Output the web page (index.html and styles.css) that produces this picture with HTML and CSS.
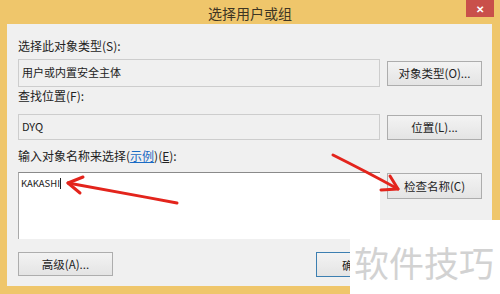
FILE: index.html
```html
<!DOCTYPE html>
<html>
<head>
    <meta charset="utf-8">
    <title>选择用户或组</title>
    <link rel="stylesheet" href="styles.css">
</head>
<body>
    <div class="window">
        <div class="titlebar">
            <span class="title">选择用户或组</span>
            <span class="close">✕</span>
        </div>

        <div class="panel">
            <div class="label">选择此对象类型(S):</div>
            <div class="row row-first">
                <div class="field field-tall">用户或内置安全主体</div>
                <button class="btn">对象类型(O)...</button>
            </div>

            <div class="label label-spaced">查找位置(F):</div>
            <div class="row row-second">
                <div class="field">DYQ</div>
                <button class="btn">位置(L)...</button>
            </div>

            <div class="label label-names">输入对象名称来选择(<a href="#">示例</a>)(<u>E</u>):</div>
            <div class="row row-top">
                <div class="names">KAKASHI<span class="caret"></span></div>
                <button class="btn">检查名称(C)</button>
            </div>

            <div class="footer">
                <button class="btn btn-wide">高级(A)...</button>
                <div class="footer-right">
                    <button class="btn btn-small btn-default">确定</button>
                    <button class="btn btn-small"></button>
                </div>
            </div>
        </div>
    </div>

    <!-- annotation arrows drawn over the screenshot -->
    <svg class="arrows" width="500" height="294" viewBox="0 0 500 294">
        <g fill="none" stroke="#e3241c" stroke-width="3" stroke-linecap="round" stroke-linejoin="round">
            <path d="M177 203 C140 196 100 189 68 183"/>
            <path d="M83 177 L68 183 L80 193"/>
            <path d="M333 155 C355 166 378 178 398 189"/>
            <path d="M390 176 L398 189 L381 190"/>
        </g>
    </svg>

    <div class="watermark">软件技巧</div>
</body>
</html>
```

FILE: styles.css
```css
body {
    margin: 0;
    padding: 0;
    width: 500px;
    height: 294px;
    overflow: hidden;
    font-family: "Noto Sans CJK SC", "Noto Sans", sans-serif;
    background-color: #efc66b;
    position: relative;
}

.window {
    display: flex;
    flex-direction: column;
    height: 294px;
}

.titlebar {
    position: relative;
    height: 24px;
    display: flex;
    justify-content: center;
    align-items: center;
}

    .titlebar .title {
        font-size: 14px;
        color: #3d3524;
        margin-top: 1px;
    }

    .titlebar .close {
        position: absolute;
        top: 0;
        right: 6px;
        width: 28px;
        height: 17px;
        background-color: #c9504a;
        color: white;
        font-size: 10px;
        font-weight: bold;
        display: flex;
        align-items: center;
        justify-content: center;
    }

.panel {
    margin: 0 8px 8px 7px;
    flex: 1;
    background-color: #f0f0f0;
    padding: 14px 10px 0 11px;
    box-sizing: border-box;
}

.label {
    font-size: 12px;
    line-height: 16px;
    color: #222;
    margin-bottom: 5px;
}

.label-spaced {
    margin-bottom: 10px;
}

.label-names {
    margin-bottom: 8px;
}

    .label a {
        color: #1a6bc4;
    }

.row {
    display: grid;
    grid-template-columns: 362px 95px;
    column-gap: 7px;
    align-items: center;
}

.row-first {
    margin-bottom: 1px;
}

.row-second {
    margin-bottom: 8px;
}

.row-top {
    align-items: start;
    margin-bottom: 13px;
}

.field {
    height: 26px;
    box-sizing: border-box;
    border: 1px solid #cdcdcd;
    background-color: #f0f0f0;
    font-size: 11px;
    line-height: 14px;
    color: #222;
    padding: 4px 3px;
}

.field-tall {
    height: 28px;
    padding-top: 5px;
}

.names {
    height: 67px;
    box-sizing: border-box;
    background-color: white;
    border-top: 1px solid #8a8a8a;
    border-left: 1px solid #a9a9a9;
    font-size: 9.5px;
    line-height: 12px;
    color: #222;
    padding: 4px 2px;
}

.caret {
    display: inline-block;
    width: 1px;
    height: 11px;
    background-color: #222;
    vertical-align: -2px;
}

.btn {
    height: 25px;
    margin: 0;
    border: 1px solid #adadad;
    background: linear-gradient(#f3f3f3, #e4e4e4);
    font-family: "Noto Sans CJK SC", "Noto Sans", sans-serif;
    font-size: 11.5px;
    color: #222;
    padding: 0;
}

.row-top .btn {
    margin-top: 1px;
    height: 26px;
}

.footer {
    display: flex;
    justify-content: space-between;
}

.btn-wide {
    width: 95px;
    height: 24px;
}

.footer-right {
    display: flex;
    gap: 16px;
}

.btn-small {
    width: 75px;
    height: 25px;
}

.btn-default {
    border-color: #3c7fb1;
}

.arrows {
    position: absolute;
    top: 0;
    left: 0;
    pointer-events: none;
}

.watermark {
    position: absolute;
    left: 350px;
    top: 220px;
    width: 150px;
    height: 74px;
    background-color: white;
    color: #d2d2d2;
    font-size: 35px;
    line-height: 40px;
    padding: 22px 0 0 4px;
    box-sizing: border-box;
    white-space: nowrap;
}
```
